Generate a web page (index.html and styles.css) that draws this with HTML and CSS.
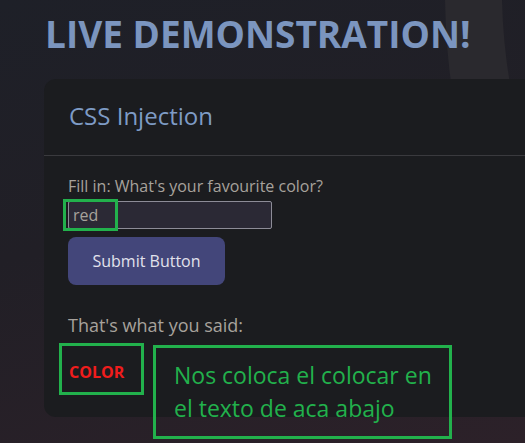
FILE: index.html
```html
<!DOCTYPE html>
<html lang="en">
<head>
<meta charset="utf-8">
<title>Live Demonstration</title>
<link rel="stylesheet" href="styles.css">
</head>
<body>
<div class="page">
  <svg class="ring" width="525" height="90" viewBox="0 0 525 90" aria-hidden="true">
    <path d="M445,0 Q446,50 452,90 L511,90 Q503,45 502,0 Z" fill="#2a292e"/>
  </svg>
  <h1 class="title">LIVE DEMONSTRATION!</h1>
  <section class="card">
    <header class="card-header">CSS Injection</header>
    <div class="card-body">
      <label class="label" for="color">Fill in: What's your favourite color?</label>
      <input class="field" id="color" type="text" value="red">
      <button class="btn" type="button">Submit Button</button>
      <p class="said">That's what you said:</p>
      <p class="result">COLOR</p>
    </div>
  </section>
  <div class="mark mark-input"></div>
  <div class="mark mark-color"></div>
  <div class="mark mark-note">Nos coloca el colocar en<br>el texto de aca abajo</div>
</div>
</body>
</html>
```
FILE: styles.css
```css
html, body {
  margin: 0;
  padding: 0;
  width: 525px;
  height: 443px;
  overflow: hidden;
}
body {
  font-family: "Open Sans", "Noto Sans", sans-serif;
  background: linear-gradient(165deg, #1e2028 0%, #211f26 45%, #2c2129 100%);
}
.page {
  position: relative;
  width: 525px;
  height: 443px;
  overflow: hidden;
  padding-top: 9px;
  box-sizing: border-box;
}
.ring {
  position: absolute;
  left: 0;
  top: 0;
}
.title {
  position: relative;
  margin: 0 0 20px 45px;
  font-size: 37px;
  font-weight: 700;
  line-height: 50px;
  color: #7b95bf;
}
.card {
  position: relative;
  margin-left: 44px;
  width: 520px;
  height: 338px;
  background: #1b1c1f;
  border-radius: 12px;
}
.card-header {
  padding: 20px 25px 23px;
  font-size: 24px;
  line-height: 33px;
  color: #7e9bc5;
  border-bottom: 1px solid #3a3a3e;
}
.card-body {
  display: flex;
  flex-direction: column;
  align-items: flex-start;
  padding: 19px 24px 0;
}
.label {
  font-size: 16px;
  line-height: 22px;
  color: #a7a29c;
}
.field {
  margin: 4px 0 0;
  width: 204px;
  height: 28px;
  box-sizing: border-box;
  padding: 0 4px;
  background: #2b2935;
  border: 1px solid #8d8c97;
  border-radius: 2px;
  color: #a7a29c;
  font-family: inherit;
  font-size: 16px;
  outline: none;
}
.btn {
  margin-top: 8px;
  width: 157px;
  height: 48px;
  border: none;
  border-radius: 8px;
  background: #43467a;
  color: #e2e2ec;
  font-family: inherit;
  font-size: 16px;
}
.said {
  margin: 28px 0 0;
  font-size: 18px;
  line-height: 25px;
  color: #a7a29c;
}
.result {
  margin: 23px 0 0 1px;
  font-size: 16px;
  line-height: 22px;
  font-weight: 700;
  color: #f01c1c;
}
.mark {
  position: absolute;
  border: 3px solid #22b14c;
  box-sizing: border-box;
}
.mark-input {
  left: 63px;
  top: 199px;
  width: 55px;
  height: 32px;
}
.mark-color {
  left: 59px;
  top: 343px;
  width: 85px;
  height: 52px;
}
.mark-note {
  left: 153px;
  top: 345px;
  width: 299px;
  height: 94px;
  padding: 11px 0 0 18px;
  font-size: 23px;
  line-height: 33px;
  color: #22b14c;
}
```
